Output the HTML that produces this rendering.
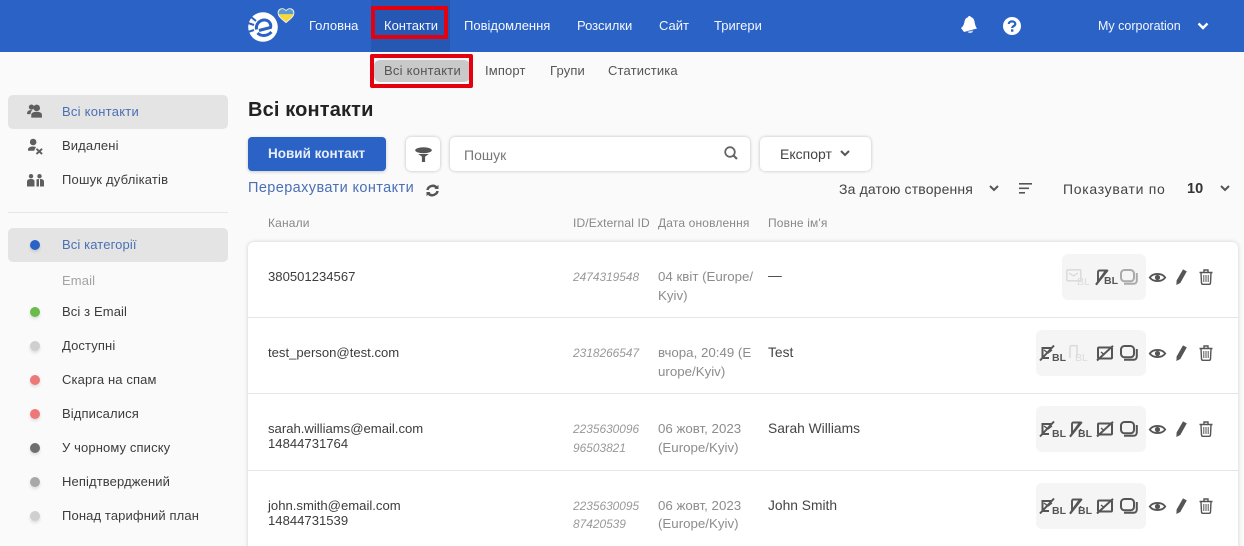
<!DOCTYPE html>
<html lang="uk"><head><meta charset="utf-8"><title>Всі контакти</title>
<style>
*{box-sizing:border-box}
html,body{margin:0;padding:0;width:1244px;height:546px;overflow:hidden}
body{background:#fafafa;font-family:"Liberation Sans",Arial,sans-serif;color:#333;font-size:13px}
#w{position:relative;width:1244px;height:546px;overflow:hidden;background:#fafafa}
.t{position:absolute;white-space:nowrap;line-height:16px}
.b{position:absolute}
.nav{color:#f4f7fd;font-size:13px;top:18px}
.sub{color:#555;font-size:13px;letter-spacing:.15px;top:63px}
.side{left:62px;color:#3c3c3c;font-size:13px;letter-spacing:.12px}
.dot{position:absolute;left:30px;width:10px;height:10px;border-radius:50%;box-shadow:0 2px 3px rgba(0,0,0,.12)}
.hd{color:#888;font-size:12px;letter-spacing:.15px;top:215px}
.id{left:573px;color:#999;font-style:italic;font-size:11.9px}
.dt{left:658px;color:#8c8c8c;font-size:13.3px}
.nm{left:768px;color:#444;font-size:13.8px}
.ch{left:268px;color:#3c3c3c;font-size:13.1px}
.grp{position:absolute;background:#f5f5f5;border-radius:6px;height:46px}
.bl{color:#555;font-size:10.500px;line-height:12px;font-weight:bold}
.blg{color:#dcdcdc;font-size:10.500px;line-height:12px}
svg{position:absolute;overflow:visible}
</style></head><body><div id="w">

<div class="b" style="left:0;top:0;width:1244px;height:52px;background:#2a62c6"></div>
<div class="b" style="left:371px;top:0;width:79px;height:52px;background:#2557b3"></div>

<!-- logo -->
<svg style="left:248px;top:12px" width="32" height="31" viewBox="0 0 32 31">
<circle cx="15" cy="15" r="14.800" fill="#fff"/>
<path d="M8.500 17.500 C7.500 11.500 12.500 7.500 17 8 C21.500 8.500 23.500 12.500 22.500 15.500 L11 18.500" fill="none" stroke="#2a62c6" stroke-width="3"/>
<path d="M9.500 21 C13 24.500 19 24.500 23.500 20" fill="none" stroke="#2a62c6" stroke-width="3"/>
<path d="M0 11 L6 13 M0 20 L6 18 M3 5 L8 9" stroke="#2a62c6" stroke-width="2"/>
<path d="M25 0 L32 7 L29 10 Z" fill="#2a62c6"/>
</svg>
<svg style="left:277px;top:8px" width="18" height="15" viewBox="0 0 18 16">
<path d="M9 15.500 C4 11.500 .6 9 .6 5 C.6 2.200 2.600 .7 4.800 .7 C6.600 .7 8 1.500 9 3 C10 1.500 11.400 .7 13.200 .7 C15.400 .7 17.400 2.200 17.400 5 C17.400 9 14 11.500 9 15.500 Z" fill="#f6d73e" stroke="#f4f4f4" stroke-width="1"/>
<path d="M1.100 6.500 C1 3 3 1.200 4.800 1.200 C6.600 1.200 8 2 9 3.500 C10 2 11.400 1.200 13.200 1.200 C15 1.200 17 3 16.900 6.500 Z" fill="#5b9bd5"/>
</svg>

<div class="t nav" style="left:309px">Головна</div>
<div class="t nav" style="left:384px">Контакти</div>
<div class="t nav" style="left:464px">Повідомлення</div>
<div class="t nav" style="left:577px">Розсилки</div>
<div class="t nav" style="left:659px">Сайт</div>
<div class="t nav" style="left:714px">Тригери</div>
<div class="b" style="left:371px;top:6px;width:77px;height:33px;border:4px solid #e3000f"></div>

<!-- bell -->
<svg style="left:960px;top:15px" width="18" height="20" viewBox="0 0 18 20">
<path d="M1 13 C4 11 4 8 4.800 5.500 C5.500 3.500 6.500 2.800 8 2.300 C8.300 .6 10.300 .4 10.800 2 C12.800 2.600 14 4 14.500 6.500 C15 9.500 15.500 11.500 17 13.500 L4 17 Z" fill="#fff"/>
<path d="M7.500 16.800 L13 15.500 C13 18.500 8.500 19 7.500 16.800 Z" fill="#fff" opacity=".75"/>
</svg>
<!-- help -->
<svg style="left:1003px;top:17px" width="18" height="18" viewBox="0 0 18 18">
<circle cx="9" cy="9" r="9" fill="#fff"/>
<path d="M5.800 7 C5.800 3.500 12.300 3.500 12.300 7 C12.300 9.200 9.200 9 9.200 11" fill="none" stroke="#2a62c6" stroke-width="2.200"/>
<rect x="8" y="12.300" width="2.400" height="2.400" fill="#2a62c6"/>
</svg>
<div class="t nav" style="left:1098px;top:18px;font-size:12.500px">My corporation</div>
<svg style="left:1197px;top:22px" width="12" height="8" viewBox="0 0 12 8"><path d="M1.500 1.500 L6 6 L10.500 1.500" fill="none" stroke="#fff" stroke-width="2.400"/></svg>

<!-- subnav -->
<div class="b" style="left:374px;top:60px;width:96px;height:22px;background:#c9c9c9;border-radius:6px"></div>
<div class="b" style="left:370px;top:54px;width:103px;height:34px;border:4px solid #e3000f;border-radius:2px"></div>
<div class="t sub" style="left:384px;letter-spacing:.25px">Всі контакти</div>
<div class="t sub" style="left:485px">Імпорт</div>
<div class="t sub" style="left:550px">Групи</div>
<div class="t sub" style="left:608px">Статистика</div>

<!-- sidebar -->
<div class="b" style="left:8px;top:95px;width:220px;height:34px;background:#e4e4e4;border-radius:5px"></div>
<svg style="left:27px;top:104px" width="15" height="14" viewBox="0 0 17 16" fill="#5f5f5f">
<circle cx="5" cy="3.500" r="3"/><circle cx="11" cy="4.500" r="3.800"/>
<path d="M0 11 C0 8 2 7 4.500 7 L6 7 C4.500 8.500 4 10 4 11.500 L0 11.500 Z"/>
<path d="M4.800 15.500 L4.800 12.500 C4.800 10 7 9 11 9 C15 9 17 10 17 12.500 L17 15.500 Z"/>
</svg>
<div class="t side" style="top:104px;color:#4a6fb5;letter-spacing:.25px">Всі контакти</div>
<svg style="left:28px;top:138px" width="15" height="17" viewBox="0 0 16 17" fill="#5f5f5f">
<circle cx="5.500" cy="3.700" r="3.500"/>
<path d="M0 13 L0 11.500 C0 9.500 2.500 8.500 5.500 8.500 C6.500 8.500 7.500 8.600 8.500 9 L6.500 13 Z"/>
<path d="M9 11 L15 16.500 M15 11 L9 16.500" stroke="#5f5f5f" stroke-width="2" fill="none"/>
</svg>
<div class="t side" style="top:138px">Видалені</div>
<svg style="left:27px;top:174px" width="17" height="13" viewBox="0 0 17 13" fill="#5f5f5f">
<circle cx="4" cy="2.200" r="2.200"/><path d="M0 12.500 L0 7.500 C0 5.500 2 5 4 5 C6 5 7.500 5.500 7.500 7.500 L7.500 12.500 Z"/>
<circle cx="12.500" cy="2.200" r="2.200"/><path d="M9.500 12.500 L9.500 5.200 L12 5 L12 12.500 Z M13 5 C15 5 17 5.500 17 7.500 L17 12.500 L13 12.500 Z"/>
</svg>
<div class="t side" style="top:172px;letter-spacing:.2px">Пошук дублікатів</div>
<div class="b" style="left:8px;top:212px;width:220px;height:1px;background:#e6e6e6"></div>

<div class="b" style="left:8px;top:228px;width:220px;height:34px;background:#e4e4e4;border-radius:5px"></div>
<div class="dot" style="top:240px;background:#2a62c6"></div>
<div class="t side" style="top:237px;color:#4a6fb5">Всі категорії</div>
<div class="t side" style="top:273px;color:#a3a3a3">Email</div>
<div class="dot" style="top:307px;background:#6abb4c"></div>
<div class="t side" style="top:304px">Всі з Email</div>
<div class="dot" style="top:341px;background:#cfcfcf"></div>
<div class="t side" style="top:338px">Доступні</div>
<div class="dot" style="top:375px;background:#ee7777"></div>
<div class="t side" style="top:372px">Скарга на спам</div>
<div class="dot" style="top:409px;background:#ee7777"></div>
<div class="t side" style="top:406px">Відписалися</div>
<div class="dot" style="top:443px;background:#6f6f6f"></div>
<div class="t side" style="top:440px">У чорному списку</div>
<div class="dot" style="top:477px;background:#a8a8a8"></div>
<div class="t side" style="top:474px">Непідтверджений</div>
<div class="dot" style="top:511px;background:#cfcfcf"></div>
<div class="t side" style="top:508px">Понад тарифний план</div>

<!-- heading -->
<div class="t" style="left:248px;top:98px;font-size:20px;font-weight:bold;color:#222;line-height:24px;letter-spacing:.15px">Всі контакти</div>

<!-- toolbar -->
<div class="b" style="left:248px;top:137px;width:138px;height:34px;background:#2a62c6;border-radius:4px;box-shadow:0 1px 3px rgba(0,0,0,.2)"></div>
<div class="t" style="left:268px;top:146px;color:#e9effa;font-size:13.500px;font-weight:bold">Новий контакт</div>
<div class="b" style="left:406px;top:137px;width:34px;height:34px;background:#fff;border-radius:5px;box-shadow:0 0 3px rgba(0,0,0,.25)"></div>
<svg style="left:415px;top:147px" width="17" height="15" viewBox="0 0 16 14" fill="#555">
<ellipse cx="8" cy="3" rx="7.800" ry="2.800"/><path d="M3 6.500 L13 6.500 L9.500 9 L9.500 14 L6.500 14 L6.500 9 Z"/>
</svg>
<div class="b" style="left:450px;top:137px;width:300px;height:34px;background:#fff;border-radius:5px;box-shadow:0 0 3px rgba(0,0,0,.25)"></div>
<div class="t" style="left:464px;top:147px;color:#777;font-size:14px">Пошук</div>
<svg style="left:724px;top:146px" width="14" height="14" viewBox="0 0 14 14" fill="none" stroke="#666" stroke-width="1.800"><circle cx="6" cy="6" r="4.800"/><path d="M9.500 9.500 L13 13" stroke-width="2.200"/></svg>
<div class="b" style="left:760px;top:137px;width:111px;height:34px;background:#fff;border-radius:5px;box-shadow:0 0 3px rgba(0,0,0,.25)"></div>
<div class="t" style="left:780px;top:146px;color:#444;font-size:14px">Експорт</div>
<svg style="left:840px;top:150px" width="10" height="7" viewBox="0 0 10 7"><path d="M1 1 L5 5 L9 1" fill="none" stroke="#555" stroke-width="2"/></svg>

<div class="t" style="left:248px;top:180px;color:#4a6fb5;font-size:14.500px;letter-spacing:.4px">Перерахувати контакти</div>
<svg style="left:426px;top:184px" width="13" height="13" viewBox="0 0 13 13" fill="none" stroke="#555" stroke-width="2.500"><path d="M1.500 6 C2 2.500 7.500 0 10.500 3.500"/><path d="M11.500 7 C11 10.500 5.500 13 2.500 9.500"/><path d="M12.500 .8 L12.500 5 L8.500 5 Z M.5 12.200 L.5 8 L4.500 8 Z" fill="#555" stroke="none"/></svg>
<div class="t" style="left:839px;top:181px;color:#444;font-size:14px;letter-spacing:.15px">За датою створення</div>
<svg style="left:989px;top:185px" width="10" height="7" viewBox="0 0 10 7"><path d="M1 1 L5 5 L9 1" fill="none" stroke="#555" stroke-width="2"/></svg>
<svg style="left:1019px;top:183px" width="13" height="11" viewBox="0 0 13 11" fill="#555"><rect width="13" height="1.600"/><rect y="4.500" width="10" height="1.600"/><rect y="9" width="6" height="1.600"/></svg>
<div class="t" style="left:1063px;top:181px;color:#444;font-size:14px;letter-spacing:.7px">Показувати по</div>
<div class="t" style="left:1187px;top:181px;color:#333;font-size:14.500px;font-weight:bold">10</div>
<svg style="left:1220px;top:185px" width="10" height="7" viewBox="0 0 10 7"><path d="M1 1 L5 5 L9 1" fill="none" stroke="#555" stroke-width="2"/></svg>

<div class="t hd" style="left:268px">Канали</div>
<div class="t hd" style="left:573px">ID/External ID</div>
<div class="t hd" style="left:658px">Дата оновлення</div>
<div class="t hd" style="left:768px">Повне ім'я</div>

<!-- card -->
<div class="b" style="left:248px;top:242px;width:990px;height:320px;background:#fff;border-radius:6px;box-shadow:0 0 4px rgba(0,0,0,.18)"></div>
<div class="b" style="left:248px;top:317px;width:990px;height:1px;background:#e6e6e6"></div>
<div class="b" style="left:248px;top:393px;width:990px;height:1px;background:#e6e6e6"></div>
<div class="b" style="left:248px;top:470px;width:990px;height:1px;background:#e6e6e6"></div>

<svg width="0" height="0" style="position:absolute">
<symbol id="mailx" viewBox="0 0 16 16" overflow="visible"><path d="M12 3 H2.500 V13 H9" fill="none" stroke="currentColor" stroke-width="2"/><path d="M4 5 L8 8 L12 5" fill="none" stroke="currentColor" stroke-width="1.400"/><path d="M0 15.500 L14 .5" stroke="currentColor" stroke-width="2" fill="none"/></symbol>
<symbol id="phx" viewBox="0 0 16 16" overflow="visible"><path d="M3 12.500 V3 C3 2 3.500 1.500 4.500 1.500 H11 L1 15.500" fill="none" stroke="currentColor" stroke-width="1.900"/><path d="M12.800 1 L1 15.800" stroke="currentColor" stroke-width="2"/><path d="M11.500 8 V9.500" stroke="currentColor" stroke-width="1.600"/></symbol>
<symbol id="sq" viewBox="0 0 16 16" overflow="visible"><rect x="1" y="2.500" width="14" height="11" rx="1" fill="none" stroke="currentColor" stroke-width="2"/><path d="M0 15.500 L16 .8" stroke="currentColor" stroke-width="2"/><path d="M4 7 L7 9.500" stroke="currentColor" stroke-width="1.400"/></symbol>
<symbol id="cp" viewBox="0 0 18 16" overflow="visible"><rect x="1" y="1" width="13" height="11.300" rx="3.500" fill="none" stroke="currentColor" stroke-width="2"/><path d="M16.800 4 V11.500 C16.800 13.500 15.500 14.800 13.500 14.800 H4" fill="none" stroke="currentColor" stroke-width="2"/></symbol>
<symbol id="eye" viewBox="0 0 17 11" overflow="visible"><path d="M.8 5.500 C4 .8 13 .8 16.200 5.500 C13 10.200 4 10.200 .8 5.500 Z" fill="none" stroke="currentColor" stroke-width="1.900"/><circle cx="8.500" cy="5.500" r="2.600" fill="currentColor"/></symbol>
<symbol id="pen" viewBox="0 0 11 16" overflow="visible"><path d="M7 .4 L10.800 2.400 L4.300 14 L.4 16 L.6 11.500 Z" fill="currentColor"/></symbol>
<symbol id="tr" viewBox="0 0 14 16" overflow="visible"><path d="M.5 3.500 H13.500 M5 3 V1 H9 V3" fill="none" stroke="currentColor" stroke-width="1.400"/><path d="M2 4 L2.500 14 C2.600 15 3 15.300 4 15.300 H10 C11 15.300 11.400 15 11.500 14 L12 4" fill="none" stroke="currentColor" stroke-width="1.400"/><path d="M4.800 6 V13 M7 6 V13 M9.200 6 V13" fill="none" stroke="currentColor" stroke-width="1"/></symbol>
</svg>

<!-- row 1 -->
<div class="t ch" style="top:269px">380501234567</div>
<div class="t id" style="top:269px">2474319548</div>
<div class="t dt" style="top:269px">04 квіт (Europe/</div>
<div class="t dt" style="top:288px">Kyiv)</div>
<div class="t nm" style="top:268px">—</div>
<div class="grp" style="left:1062px;top:254px;width:84px"></div>
<svg style="left:1066px;top:269px;color:#dcdcdc" width="16" height="14"><rect x=".8" y=".8" width="14" height="11" rx="1" fill="none" stroke="currentColor" stroke-width="1.600"/><path d="M3 4 L7.500 7 L12 4" fill="none" stroke="currentColor" stroke-width="1.400"/></svg>
<div class="t blg" style="left:1077px;top:276px">BL</div>
<svg style="left:1095px;top:269px;color:#555" width="14" height="16"><use href="#phx" width="16" height="16"/></svg>
<div class="t bl" style="left:1104px;top:275px">BL</div>
<svg style="left:1120px;top:269px;color:#aaa" width="18" height="16"><use href="#cp" width="18" height="16"/></svg>

<!-- row 2 -->
<div class="t ch" style="top:345px">test_person@test.com</div>
<div class="t id" style="top:345px">2318266547</div>
<div class="t dt" style="top:345px">вчора, 20:49 (E</div>
<div class="t dt" style="top:364px">urope/Kyiv)</div>
<div class="t nm" style="top:345px">Test</div>
<div class="grp" style="left:1036px;top:330px;width:110px"></div>
<svg style="left:1040px;top:345px;color:#555" width="16" height="16"><use href="#mailx" width="16" height="16"/></svg>
<div class="t bl" style="left:1052px;top:352px">BL</div>
<svg style="left:1069px;top:345px;color:#dcdcdc" width="10" height="14"><path d="M1 13 V2 C1 1 1.500 .7 2.500 .7 H8 V12" fill="none" stroke="currentColor" stroke-width="1.600"/></svg>
<div class="t blg" style="left:1075px;top:352px">BL</div>
<svg style="left:1097px;top:345px;color:#555" width="16" height="16"><use href="#sq" width="16" height="16"/></svg>
<svg style="left:1120px;top:345px;color:#555" width="18" height="16"><use href="#cp" width="18" height="16"/></svg>

<!-- row 3 -->
<div class="t ch" style="top:421px">sarah.williams@email.com</div>
<div class="t ch" style="top:436px">14844731764</div>
<div class="t id" style="top:421px">2235630096</div>
<div class="t id" style="top:440px">96503821</div>
<div class="t dt" style="top:421px">06 жовт, 2023</div>
<div class="t dt" style="top:440px">(Europe/Kyiv)</div>
<div class="t nm" style="top:421px">Sarah Williams</div>
<div class="grp" style="left:1036px;top:406px;width:110px"></div>
<svg style="left:1040px;top:421px;color:#555" width="16" height="16"><use href="#mailx" width="16" height="16"/></svg>
<div class="t bl" style="left:1052px;top:428px">BL</div>
<svg style="left:1069px;top:421px;color:#555" width="14" height="16"><use href="#phx" width="16" height="16"/></svg>
<div class="t bl" style="left:1078px;top:428px">BL</div>
<svg style="left:1097px;top:421px;color:#555" width="16" height="16"><use href="#sq" width="16" height="16"/></svg>
<svg style="left:1120px;top:421px;color:#555" width="18" height="16"><use href="#cp" width="18" height="16"/></svg>

<!-- row 4 -->
<div class="t ch" style="top:498px">john.smith@email.com</div>
<div class="t ch" style="top:513px">14844731539</div>
<div class="t id" style="top:498px">2235630095</div>
<div class="t id" style="top:516px">87420539</div>
<div class="t dt" style="top:498px">06 жовт, 2023</div>
<div class="t dt" style="top:516px">(Europe/Kyiv)</div>
<div class="t nm" style="top:498px">John Smith</div>
<div class="grp" style="left:1036px;top:483px;width:110px"></div>
<svg style="left:1040px;top:498px;color:#555" width="16" height="16"><use href="#mailx" width="16" height="16"/></svg>
<div class="t bl" style="left:1052px;top:505px">BL</div>
<svg style="left:1069px;top:498px;color:#555" width="14" height="16"><use href="#phx" width="16" height="16"/></svg>
<div class="t bl" style="left:1078px;top:505px">BL</div>
<svg style="left:1097px;top:498px;color:#555" width="16" height="16"><use href="#sq" width="16" height="16"/></svg>
<svg style="left:1120px;top:498px;color:#555" width="18" height="16"><use href="#cp" width="18" height="16"/></svg>

<!-- row actions -->
<svg style="left:1149px;top:272px;color:#555" width="17" height="11"><use href="#eye" width="17" height="11"/></svg>
<svg style="left:1176px;top:269px;color:#555" width="11" height="16"><use href="#pen" width="11" height="16"/></svg>
<svg style="left:1199px;top:269px;color:#555" width="14" height="16"><use href="#tr" width="14" height="16"/></svg>
<svg style="left:1149px;top:348px;color:#555" width="17" height="11"><use href="#eye" width="17" height="11"/></svg>
<svg style="left:1176px;top:345px;color:#555" width="11" height="16"><use href="#pen" width="11" height="16"/></svg>
<svg style="left:1199px;top:345px;color:#555" width="14" height="16"><use href="#tr" width="14" height="16"/></svg>
<svg style="left:1149px;top:424px;color:#555" width="17" height="11"><use href="#eye" width="17" height="11"/></svg>
<svg style="left:1176px;top:421px;color:#555" width="11" height="16"><use href="#pen" width="11" height="16"/></svg>
<svg style="left:1199px;top:421px;color:#555" width="14" height="16"><use href="#tr" width="14" height="16"/></svg>
<svg style="left:1149px;top:501px;color:#555" width="17" height="11"><use href="#eye" width="17" height="11"/></svg>
<svg style="left:1176px;top:498px;color:#555" width="11" height="16"><use href="#pen" width="11" height="16"/></svg>
<svg style="left:1199px;top:498px;color:#555" width="14" height="16"><use href="#tr" width="14" height="16"/></svg>

</div></body></html>
